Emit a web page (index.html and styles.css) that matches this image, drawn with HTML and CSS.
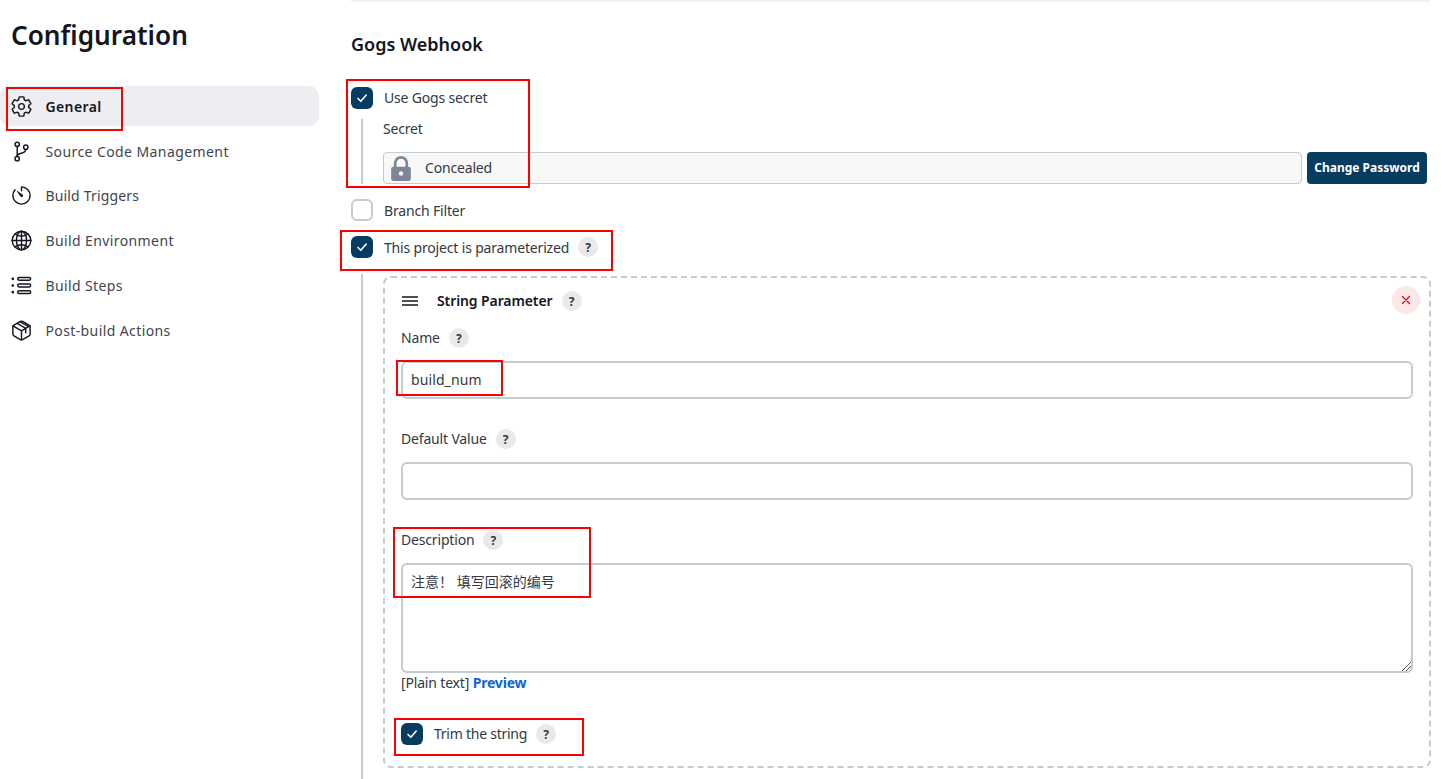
FILE: index.html
```html
<!DOCTYPE html>
<html lang="en">
<head>
<meta charset="utf-8">
<title>Configuration</title>
<link rel="stylesheet" href="styles.css">
</head>
<body>
<div class="page">
  <aside class="sidebar">
    <h1 class="page-title">Configuration</h1>
    <nav class="nav">
      <a class="nav-item active">
        <svg class="nav-icon" viewBox="0 0 512 512"><path class="ln" d="M262.29 192.31a64 64 0 1057.4 57.4 64.13 64.13 0 00-57.4-57.4zM416.39 256a154.34 154.34 0 01-1.53 20.79l45.21 35.46a10.81 10.81 0 012.45 13.75l-42.77 74a10.81 10.81 0 01-13.14 4.59l-44.9-18.08a16.11 16.11 0 00-15.17 1.75A164.48 164.48 0 01325 400.8a15.94 15.94 0 00-8.82 12.14l-6.73 47.89a11.08 11.08 0 01-10.68 9.17h-85.54a11.11 11.11 0 01-10.69-8.87l-6.72-47.82a16.07 16.07 0 00-9-12.22 155.3 155.3 0 01-21.46-12.57 16 16 0 00-15.11-1.71l-44.89 18.07a10.81 10.81 0 01-13.14-4.58l-42.77-74a10.8 10.8 0 012.45-13.75l38.21-30a16.05 16.05 0 006-14.08c-.36-4.17-.58-8.33-.58-12.5s.21-8.27.58-12.35a16 16 0 00-6.07-13.94l-38.19-30A10.81 10.81 0 0149.48 186l42.77-74a10.81 10.81 0 0113.14-4.59l44.9 18.08a16.11 16.11 0 0015.17-1.75A164.48 164.48 0 01187 111.2a15.94 15.94 0 008.82-12.14l6.73-47.89A11.08 11.08 0 01213.23 42h85.54a11.11 11.11 0 0110.69 8.87l6.72 47.82a16.07 16.07 0 009 12.22 155.3 155.3 0 0121.46 12.57 16 16 0 0015.11 1.71l44.89-18.07a10.81 10.81 0 0113.14 4.58l42.77 74a10.8 10.8 0 01-2.45 13.75l-38.21 30a16.05 16.05 0 00-6.05 14.08c.33 4.14.55 8.3.55 12.47z"/></svg>
        <span>General</span>
      </a>
      <a class="nav-item">
        <svg class="nav-icon" viewBox="0 0 512 512"><circle class="ln" cx="160" cy="96" r="48"/><circle class="ln" cx="160" cy="416" r="48"/><path class="ln" d="M160 368V144"/><circle class="ln" cx="352" cy="160" r="48"/><path class="ln" d="M352 208c0 128-192 48-192 160"/></svg>
        <span class="wide">Source Code Management</span>
      </a>
      <a class="nav-item">
        <svg class="nav-icon" viewBox="0 0 512 512"><path class="ln" d="M112.91 128A191.85 191.85 0 0064 254c-1.18 106.35 85.65 193.8 192 194 106.2.2 192-85.83 192-192 0-104.54-83.55-189.61-187.5-192a4.36 4.36 0 00-4.5 4.37V152"/><path class="fl" d="M233.38 278.63l-79-113a8.13 8.13 0 0111.32-11.32l113 79a32.5 32.5 0 01-37.25 53.26 33.21 33.21 0 01-8.07-7.94z"/></svg>
        <span class="tight">Build Triggers</span>
      </a>
      <a class="nav-item">
        <svg class="nav-icon" viewBox="0 0 512 512"><path class="ln" d="M256 48C141.13 48 48 141.13 48 256s93.13 208 208 208 208-93.13 208-208S370.87 48 256 48z"/><path class="ln" d="M256 48c-58.07 0-112.67 93.13-112.67 208S197.93 464 256 464s112.67-93.13 112.67-208S314.07 48 256 48z"/><path class="ln" d="M117.33 117.33c38.24 27.15 86.38 43.34 138.67 43.34s100.43-16.19 138.67-43.34M394.67 394.67c-38.24-27.15-86.38-43.34-138.67-43.34s-100.43 16.19-138.67 43.34"/><path class="ln" d="M256 48v416M464 256H48"/></svg>
        <span>Build Environment</span>
      </a>
      <a class="nav-item">
        <svg class="nav-icon" viewBox="0 0 512 512"><rect class="ln" x="170" y="76" width="290" height="64" rx="32"/><rect class="ln" x="170" y="224" width="290" height="64" rx="32"/><rect class="ln" x="170" y="372" width="290" height="64" rx="32"/><circle class="ln" cx="62" cy="108" r="14"/><circle class="ln" cx="62" cy="256" r="14"/><circle class="ln" cx="62" cy="404" r="14"/></svg>
        <span>Build Steps</span>
      </a>
      <a class="nav-item">
        <svg class="nav-icon" viewBox="0 0 512 512"><path class="ln" d="M448 341.37V170.61A32 32 0 00432.11 143l-152-88.46a47.94 47.94 0 00-48.24 0L79.89 143A32 32 0 0064 170.61v170.76A32 32 0 0079.89 369l152 88.46a48 48 0 0048.24 0l152-88.46A32 32 0 00448 341.37z"/><path class="ln" d="M69 153.99l187 110 187-110M256 463.99v-200M160 96l190 112v96M226 64l190 104"/></svg>
        <span>Post-build Actions</span>
      </a>
    </nav>
  </aside>

  <main class="content">
    <div class="top-rule"></div>
    <h2 class="section-title">Gogs Webhook</h2>

    <label class="check-row first">
      <span class="check on"><svg viewBox="0 0 22 22"><path class="tick" d="M7 11.5l2.8 2.8L15.2 8"/></svg></span>
      <span class="lbl">Use Gogs secret</span>
    </label>
    <div class="nested secret-block">
      <div class="secret-label">Secret</div>
      <div class="secret-row">
        <div class="concealed">
          <svg class="lock" viewBox="0 0 22 28"><path d="M11 0a8 8 0 00-8 8v4H2.500A2.500 2.500 0 000 14.500v11A2.500 2.500 0 002.500 28h17a2.500 2.500 0 002.500-2.500v-11a2.500 2.500 0 00-2.500-2.500H19V8a8 8 0 00-8-8zm-5 8a5 5 0 0110 0v4H6V8zm5 9a2.500 2.500 0 110 5 2.500 2.500 0 010-5z" fill-rule="evenodd"/></svg>
          <span class="lbl">Concealed</span>
        </div>
        <button class="btn">Change Password</button>
      </div>
    </div>

    <label class="check-row branch">
      <span class="check"></span>
      <span>Branch Filter</span>
    </label>
    <label class="check-row param">
      <span class="check on"><svg viewBox="0 0 22 22"><path class="tick" d="M7 11.5l2.8 2.8L15.2 8"/></svg></span>
      <span>This project is parameterized</span>
      <span class="help">?</span>
    </label>

    <div class="nested param-block">
      <section class="repeatable">
        <header class="rep-head">
          <svg class="handle" viewBox="0 0 16 10"><path d="M0 1h16M0 5h16M0 9h16"/></svg>
          <strong class="lbl">String Parameter</strong>
          <span class="help">?</span>
          <span class="close"><svg viewBox="0 0 10 10"><path d="M1.500 1.500l7 7M8.500 1.500l-7 7"/></svg></span>
        </header>

        <div class="field-label name-label"><span class="lbl">Name</span><span class="help">?</span></div>
        <div class="input">build_num</div>

        <div class="field-label"><span class="lbl">Default Value</span><span class="help">?</span></div>
        <div class="input"></div>

        <div class="field-label"><span class="lbl">Description</span><span class="help">?</span></div>
        <div class="textarea">注意！ 填写回滚的编号
          <svg class="grip" viewBox="0 0 10 10"><path d="M1 10L10 1M5 10l5-5"/></svg>
        </div>
        <div class="plain">[Plain text] <a class="link">Preview</a></div>

        <label class="check-row trim">
          <span class="check on"><svg viewBox="0 0 22 22"><path class="tick" d="M7 11.5l2.8 2.8L15.2 8"/></svg></span>
          <span class="lbl">Trim the string</span>
          <span class="help">?</span>
        </label>
      </section>
    </div>
  </main>
</div>

<div class="mark m1"></div>
<div class="mark m2"></div>
<div class="mark m3"></div>
<div class="mark m4"></div>
<div class="mark m5"></div>
<div class="mark m6"></div>
</body>
</html>
```

FILE: styles.css
```css
* { box-sizing: border-box; }
html, body { margin: 0; height: 779px; overflow: hidden; background: #fff; }
body {
  font-family: "Noto Sans", "Noto Sans CJK SC", sans-serif;
  font-size: 14px;
  color: #1f2430;
  position: relative;
}
.page { display: flex; align-items: flex-start; height: 779px; }

.sidebar { width: 351px; flex: none; padding-right: 32px; }
.page-title {
  margin: 16px 0 0 11px;
  font-size: 26.2px;
  line-height: 38px;
  font-weight: 600;
  color: #14151f;
}
.nav { margin-top: 32.4px; display: flex; flex-direction: column; gap: 4.8px; }
.nav-item {
  display: flex;
  align-items: center;
  height: 40px;
  padding-left: 10px;
  gap: 12.4px;
  color: #41454f;
  font-size: 14px;
  letter-spacing: .4px;
  border-radius: 0 10px 10px 0;
}
.nav-item.active { background: #ededf2; font-weight: 600; color: #14151f; border-radius: 10px; }
.nav-item .tight { letter-spacing: .18px; }
.nav-item .wide { letter-spacing: .42px; }
.nav-icon { width: 23px; height: 23px; flex: none; }
.ln { fill: none; stroke: #14151f; stroke-width: 32; stroke-linecap: round; stroke-linejoin: round; }
.fl { fill: #14151f; }

.content { width: 1079px; flex: none; color: #333842; letter-spacing: -.17px; }
.top-rule { height: 2px; background: #f1f1f3; }
.section-title {
  margin: 29px 0 0;
  font-size: 18px;
  line-height: 26px;
  font-weight: 600;
  color: #14151f;
  letter-spacing: 0;
}
.lbl { margin-bottom: 2px; }
.check-row { display: flex; align-items: center; height: 22px; gap: 11px; }
.check-row.first { margin-top: 30px; }
.check {
  width: 22px; height: 22px; flex: none;
  border: 2px solid #c3ccd1;
  border-radius: 6px;
  background: #fff;
}
.check.on { background: #063c5f; border: 0; }
.check svg { display: block; width: 22px; height: 22px; }
.tick { fill: none; stroke: #fff; stroke-width: 1.6; stroke-linecap: round; stroke-linejoin: round; }

.help {
  display: inline-flex; align-items: center; justify-content: center;
  width: 20px; height: 20px; flex: none;
  border-radius: 50%;
  background: #e9e9eb;
  color: #333842;
  font-size: 12px;
  font-weight: 700;
  letter-spacing: 0;
  margin-left: 9px;
}
.check-row .help { margin-left: -2px; }

.nested { margin-left: 10px; border-left: 2px solid #c3ccd1; padding-left: 20px; }
.secret-block { margin-top: 10px; height: 65px; }
.secret-label { line-height: 20px; }
.secret-row { display: flex; gap: 5px; margin-top: 13px; margin-right: 3px; }
.concealed {
  flex: 1;
  height: 32px;
  display: flex; align-items: center; gap: 14px;
  padding-left: 7px;
  background: #f8f8f8;
  border: 1px solid #c3ccd1;
  border-radius: 4px;
}
.lock { width: 20px; height: 25px; fill: #7b8794; flex: none; }
.btn {
  width: 120px; height: 32px; padding: 0 0 2px;
  border: 0; border-radius: 4px;
  background: #063c5f; color: #fff;
  font: 700 12px "Noto Sans", sans-serif;
}
.branch { margin-top: 15px; }
.param { margin-top: 15px; }

.param-block { margin-top: 16px; height: 510px; padding-left: 20px; padding-top: 2px; }
.repeatable {
  position: relative;
  width: 1048px;
  height: 492px;
  border: 2px dashed #c3ccd1;
  border-radius: 8px;
  padding: 0 16px;
}
.rep-head { display: flex; align-items: center; height: 20px; margin-top: 13px; font-size: 14px; color: #14151f; }
.rep-head strong { font-weight: 600; margin-left: 19px; letter-spacing: -.1px; }
.rep-head .help { margin-left: 9px; }
.handle { width: 16px; height: 10px; flex: none; margin-left: 1px; }
.handle path { fill: none; stroke: #14151f; stroke-width: 1.300; }
.close {
  position: absolute; right: 9px; top: 8px;
  width: 28px; height: 28px; border-radius: 50%;
  background: #fbe9ea;
  display: flex; align-items: center; justify-content: center;
}
.close svg { width: 10px; height: 10px; }
.close path { fill: none; stroke: #e6001f; stroke-width: 1.300; stroke-linecap: round; }

.field-label { display: flex; align-items: center; height: 20px; }
.name-label { margin-top: 17px; }
.input {
  height: 38px;
  margin: 13px 0 30px;
  border: 2px solid #c3ccd1;
  border-radius: 6px;
  padding: 0 8px;
  line-height: 34px;
  color: #333842;
  letter-spacing: .1px;
}
.textarea {
  position: relative;
  height: 110px;
  margin-top: 13px;
  border: 2px solid #c3ccd1;
  border-radius: 6px;
  padding: 7px 8px;
  font-size: 14px;
  line-height: 20px;
  letter-spacing: 0;
}
.grip { position: absolute; right: 0; bottom: 0; width: 10px; height: 10px; }
.grip path { stroke: #555; stroke-width: 1; fill: none; }
.plain { margin-top: 0; line-height: 20px; }
.link { color: #0b66d6; font-weight: 700; }
.trim { margin-top: 30px; letter-spacing: -.25px; }

.mark { position: absolute; border: 2px solid #f00; pointer-events: none; }
.m1 { left: 6px; top: 87px; width: 117px; height: 44px; }
.m2 { left: 346px; top: 79px; width: 184px; height: 109px; }
.m3 { left: 340px; top: 230px; width: 273px; height: 41px; }
.m4 { left: 396px; top: 360px; width: 107px; height: 36px; }
.m5 { left: 393px; top: 527px; width: 198px; height: 71px; }
.m6 { left: 394px; top: 718px; width: 190px; height: 38px; }
```
